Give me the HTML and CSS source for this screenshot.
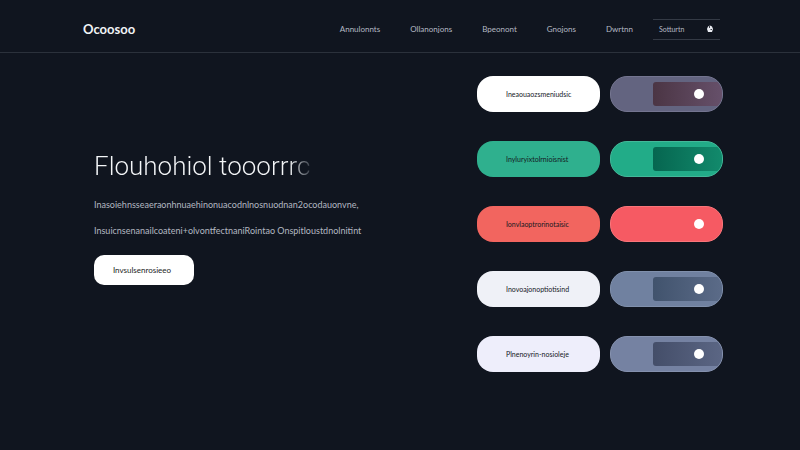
FILE: index.html
```html
<!DOCTYPE html>
<html lang="en">
<head>
  <meta charset="UTF-8" />
  <title>Ocoosoo</title>
  <meta name="viewport" content="width=device-width, initial-scale=1.0" />
  <link rel="stylesheet" href="styles.css">
</head>
<body>
  <header class="header">
    <a class="logo" href="#">Ocoosoo</a>
    <nav class="nav">
      <a href="#">Annulonnts</a>
      <a href="#">Ollanonjons</a>
      <a href="#">Bpeonont</a>
      <a href="#">Gnojons</a>
      <a href="#">Dwrtnn</a>
      <button class="nav-select" type="button">
        Sotturtn
        <svg width="8" height="8" viewBox="0 0 8 8" aria-hidden="true">
          <path d="M2 1.5 L4 0.5 L6 1.5 L7 4 L6 7 L2 7 L1 4 Z" fill="#e9ecf2" />
          <path d="M3.5 1 V3 M4.5 4.5 H6" stroke="#10151f" stroke-width="0.8" fill="none" />
        </svg>
      </button>
    </nav>
  </header>

  <main class="main">
    <section class="hero">
      <h1>Flouhohiol tooorrrc</h1>
      <p>Inasoiehnsseaeraonhnuaehinonuacodnlnosnuodnan2ocodauonvne,</p>
      <p>Insuicnsenanailcoateni+olvontfectnaniRointao Onspitloustdnolnitint</p>
      <button class="cta" type="button">Invsulsenrosieeo</button>
    </section>

    <section class="options">
      <div class="row white">
        <button class="pill" type="button">Ineaouaozsmeniudsic</button>
        <input class="toggle" type="checkbox" aria-label="Ineaouaozsmeniudsic" checked />
      </div>
      <div class="row green">
        <button class="pill" type="button">Inyluryixtolrnioisnist</button>
        <input class="toggle" type="checkbox" aria-label="Inyluryixtolrnioisnist" checked />
      </div>
      <div class="row red">
        <button class="pill" type="button">Ionvlaoptrorinotaisic</button>
        <input class="toggle" type="checkbox" aria-label="Ionvlaoptrorinotaisic" checked />
      </div>
      <div class="row slate">
        <button class="pill" type="button">Inovoajonoptiotisind</button>
        <input class="toggle" type="checkbox" aria-label="Inovoajonoptiotisind" checked />
      </div>
      <div class="row lavender">
        <button class="pill" type="button">Plnenoyrin-nosioleje</button>
        <input class="toggle" type="checkbox" aria-label="Plnenoyrin-nosioleje" checked />
      </div>
    </section>
  </main>
</body>
</html>
```
FILE: styles.css
```css
* {
  box-sizing: border-box;
}

body {
  margin: 0;
  min-height: 100vh;
  background: #10151f;
  color: #fff;
  font-family: Lato, sans-serif;
}

button {
  font-family: inherit;
  cursor: pointer;
}

/* Header */
.header {
  display: flex;
  align-items: center;
  justify-content: space-between;
  height: 53px;
  padding: 6px 80px 0 83px;
  border-bottom: 1px solid #2b313b;
}

.logo {
  color: #f1f3f6;
  font-size: 13px;
  font-weight: 700;
  text-decoration: none;
}

.nav {
  display: flex;
  align-items: center;
  gap: 30px;
}

.nav a {
  color: #b4b9c3;
  font-size: 8px;
  text-decoration: none;
}

.nav-select {
  display: flex;
  align-items: center;
  justify-content: space-between;
  width: 67px;
  height: 21px;
  margin-left: -10px;
  padding: 0 6px;
  background: transparent;
  border: 1px solid #343a45;
  border-width: 1px 0;
  color: #b4b9c3;
  font-size: 7px;
}

/* Main area */
.main {
  display: flex;
  align-items: flex-start;
  justify-content: space-between;
  padding: 23px 77px 40px 94px;
}

.hero {
  padding-top: 72px;
}

.hero h1 {
  width: fit-content;
  margin: 0 0 15px;
  background: linear-gradient(90deg, #f4f6f8 90%, #3c424c);
  background-clip: text;
  -webkit-background-clip: text;
  color: transparent;
  font-family: Roboto, sans-serif;
  font-size: 26px;
  font-weight: 300;
  line-height: 36px;
}

.hero p {
  margin: 0 0 14px;
  color: #b3b8c1;
  font-size: 9px;
  line-height: 12px;
}

.cta {
  display: block;
  width: 100px;
  height: 30px;
  margin-top: 18px;
  padding: 0 4px 0 0;
  background: #fff;
  border: none;
  border-radius: 10px;
  color: #1b1e24;
  font-size: 8px;
}

.options {
  display: flex;
  flex-direction: column;
  gap: 29px;
}

.row {
  display: flex;
  gap: 10px;
}

.pill {
  width: 123px;
  height: 36px;
  padding: 0 0 0 29px;
  background: var(--pill);
  border: none;
  border-radius: 16px;
  color: #14181e;
  font-size: 7px;
  text-align: left;
}

/* Switch: inner track on the right with a round knob */
.toggle {
  appearance: none;
  position: relative;
  width: 113px;
  height: 36px;
  margin: 0;
  overflow: hidden;
  background: var(--base);
  border: 1px solid var(--edge);
  border-radius: 17px;
  cursor: pointer;
}

.toggle::before {
  content: '';
  position: absolute;
  top: 5px;
  right: 0;
  width: 69px;
  height: 24px;
  background: var(--track);
  border-radius: 3px 0 0 3px;
}

.toggle::after {
  content: '';
  position: absolute;
  top: 12px;
  right: 18px;
  width: 10px;
  height: 10px;
  background: #fff;
  border-radius: 50%;
}

.white {
  --pill: #fff;
  --base: #636480;
  --edge: #747590;
  --track: linear-gradient(90deg, #4b3544, #66506a);
}

.green {
  --pill: #2fb08e;
  --base: #22ac88;
  --edge: #43b899;
  --track: linear-gradient(90deg, #066650, #128a6c);
}

.red {
  --pill: #f2655f;
  --base: #f65a63;
  --edge: #f9757a;
  --track: transparent;
}

.slate {
  --pill: #eff1f7;
  --base: #7081a0;
  --edge: #8090ac;
  --track: linear-gradient(90deg, #41536d, #5b6b88);
}

.lavender {
  --pill: #eeeefb;
  --base: #7582a2;
  --edge: #8591ae;
  --track: linear-gradient(90deg, #444e69, #5b6684);
}
```
